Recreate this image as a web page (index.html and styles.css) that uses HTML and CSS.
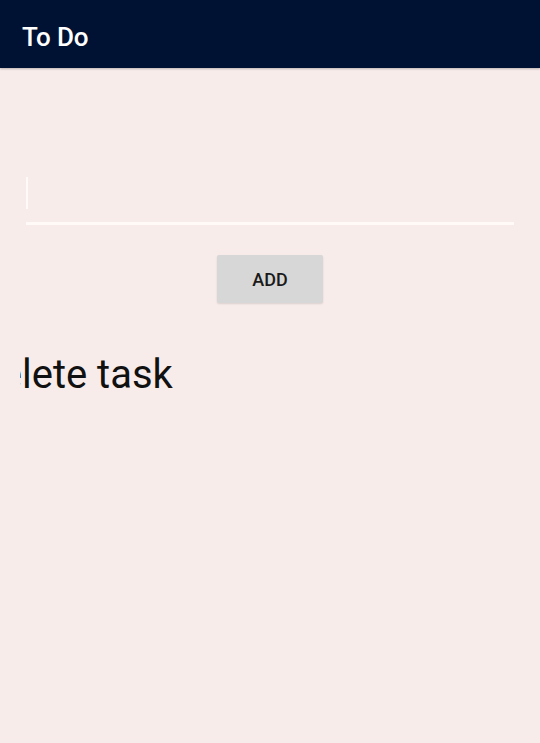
FILE: index.html
```html
<!DOCTYPE html>
<html>
<head>
<meta charset="utf-8">
<link rel="stylesheet" href="styles.css">
</head>
<body>
<header class="appbar"><h1 class="title">To Do</h1></header>
<main class="content">
  <div class="field">
    <div class="cursor"></div>
  </div>
  <div class="actions"><button class="add-btn">ADD</button></div>
  <div class="task-clip"><span class="task">Delete task</span></div>
</main>
</body>
</html>
```
FILE: styles.css
```css
html, body {
  margin: 0;
  padding: 0;
}
body {
  width: 540px;
  height: 743px;
  background: #f8ecea;
  font-family: Roboto, "Noto Sans", sans-serif;
  overflow: hidden;
}
.appbar {
  height: 68px;
  background: #001233;
  display: flex;
  align-items: center;
  padding-left: 22px;
  box-shadow: 0 1px 2px rgba(0,0,0,0.25);
  position: relative;
}
.title {
  margin: 0;
  color: #ffffff;
  font-size: 26px;
  font-weight: 500;
  letter-spacing: -0.1px;
  padding-top: 6px;
}
.content {
  display: flex;
  flex-direction: column;
}
.field {
  margin: 109px 26px 0 26px;
  height: 45px;
  border-bottom: 3px solid #fffaf7;
  display: flex;
  align-items: flex-start;
}
.cursor {
  width: 2px;
  height: 32px;
  background: #fffaf7;
}
.actions {
  display: flex;
  justify-content: center;
  margin-top: 30px;
}
.add-btn {
  width: 106px;
  height: 48px;
  border: none;
  border-radius: 2px;
  background: #d6d7d6;
  color: #1a1a1a;
  font-family: Roboto, "Noto Sans", sans-serif;
  font-size: 18px;
  font-weight: 500;
  box-shadow: 0 1px 2px rgba(0,0,0,0.12);
  padding: 0;
}
.task-clip {
  margin-top: 47px;
  margin-left: 20px;
  overflow: hidden;
  width: 300px;
  height: 50px;
}
.task {
  display: block;
  white-space: nowrap;
  font-size: 40px;
  color: #111111;
  margin-left: -45.5px;
  line-height: 50px;
}
```
